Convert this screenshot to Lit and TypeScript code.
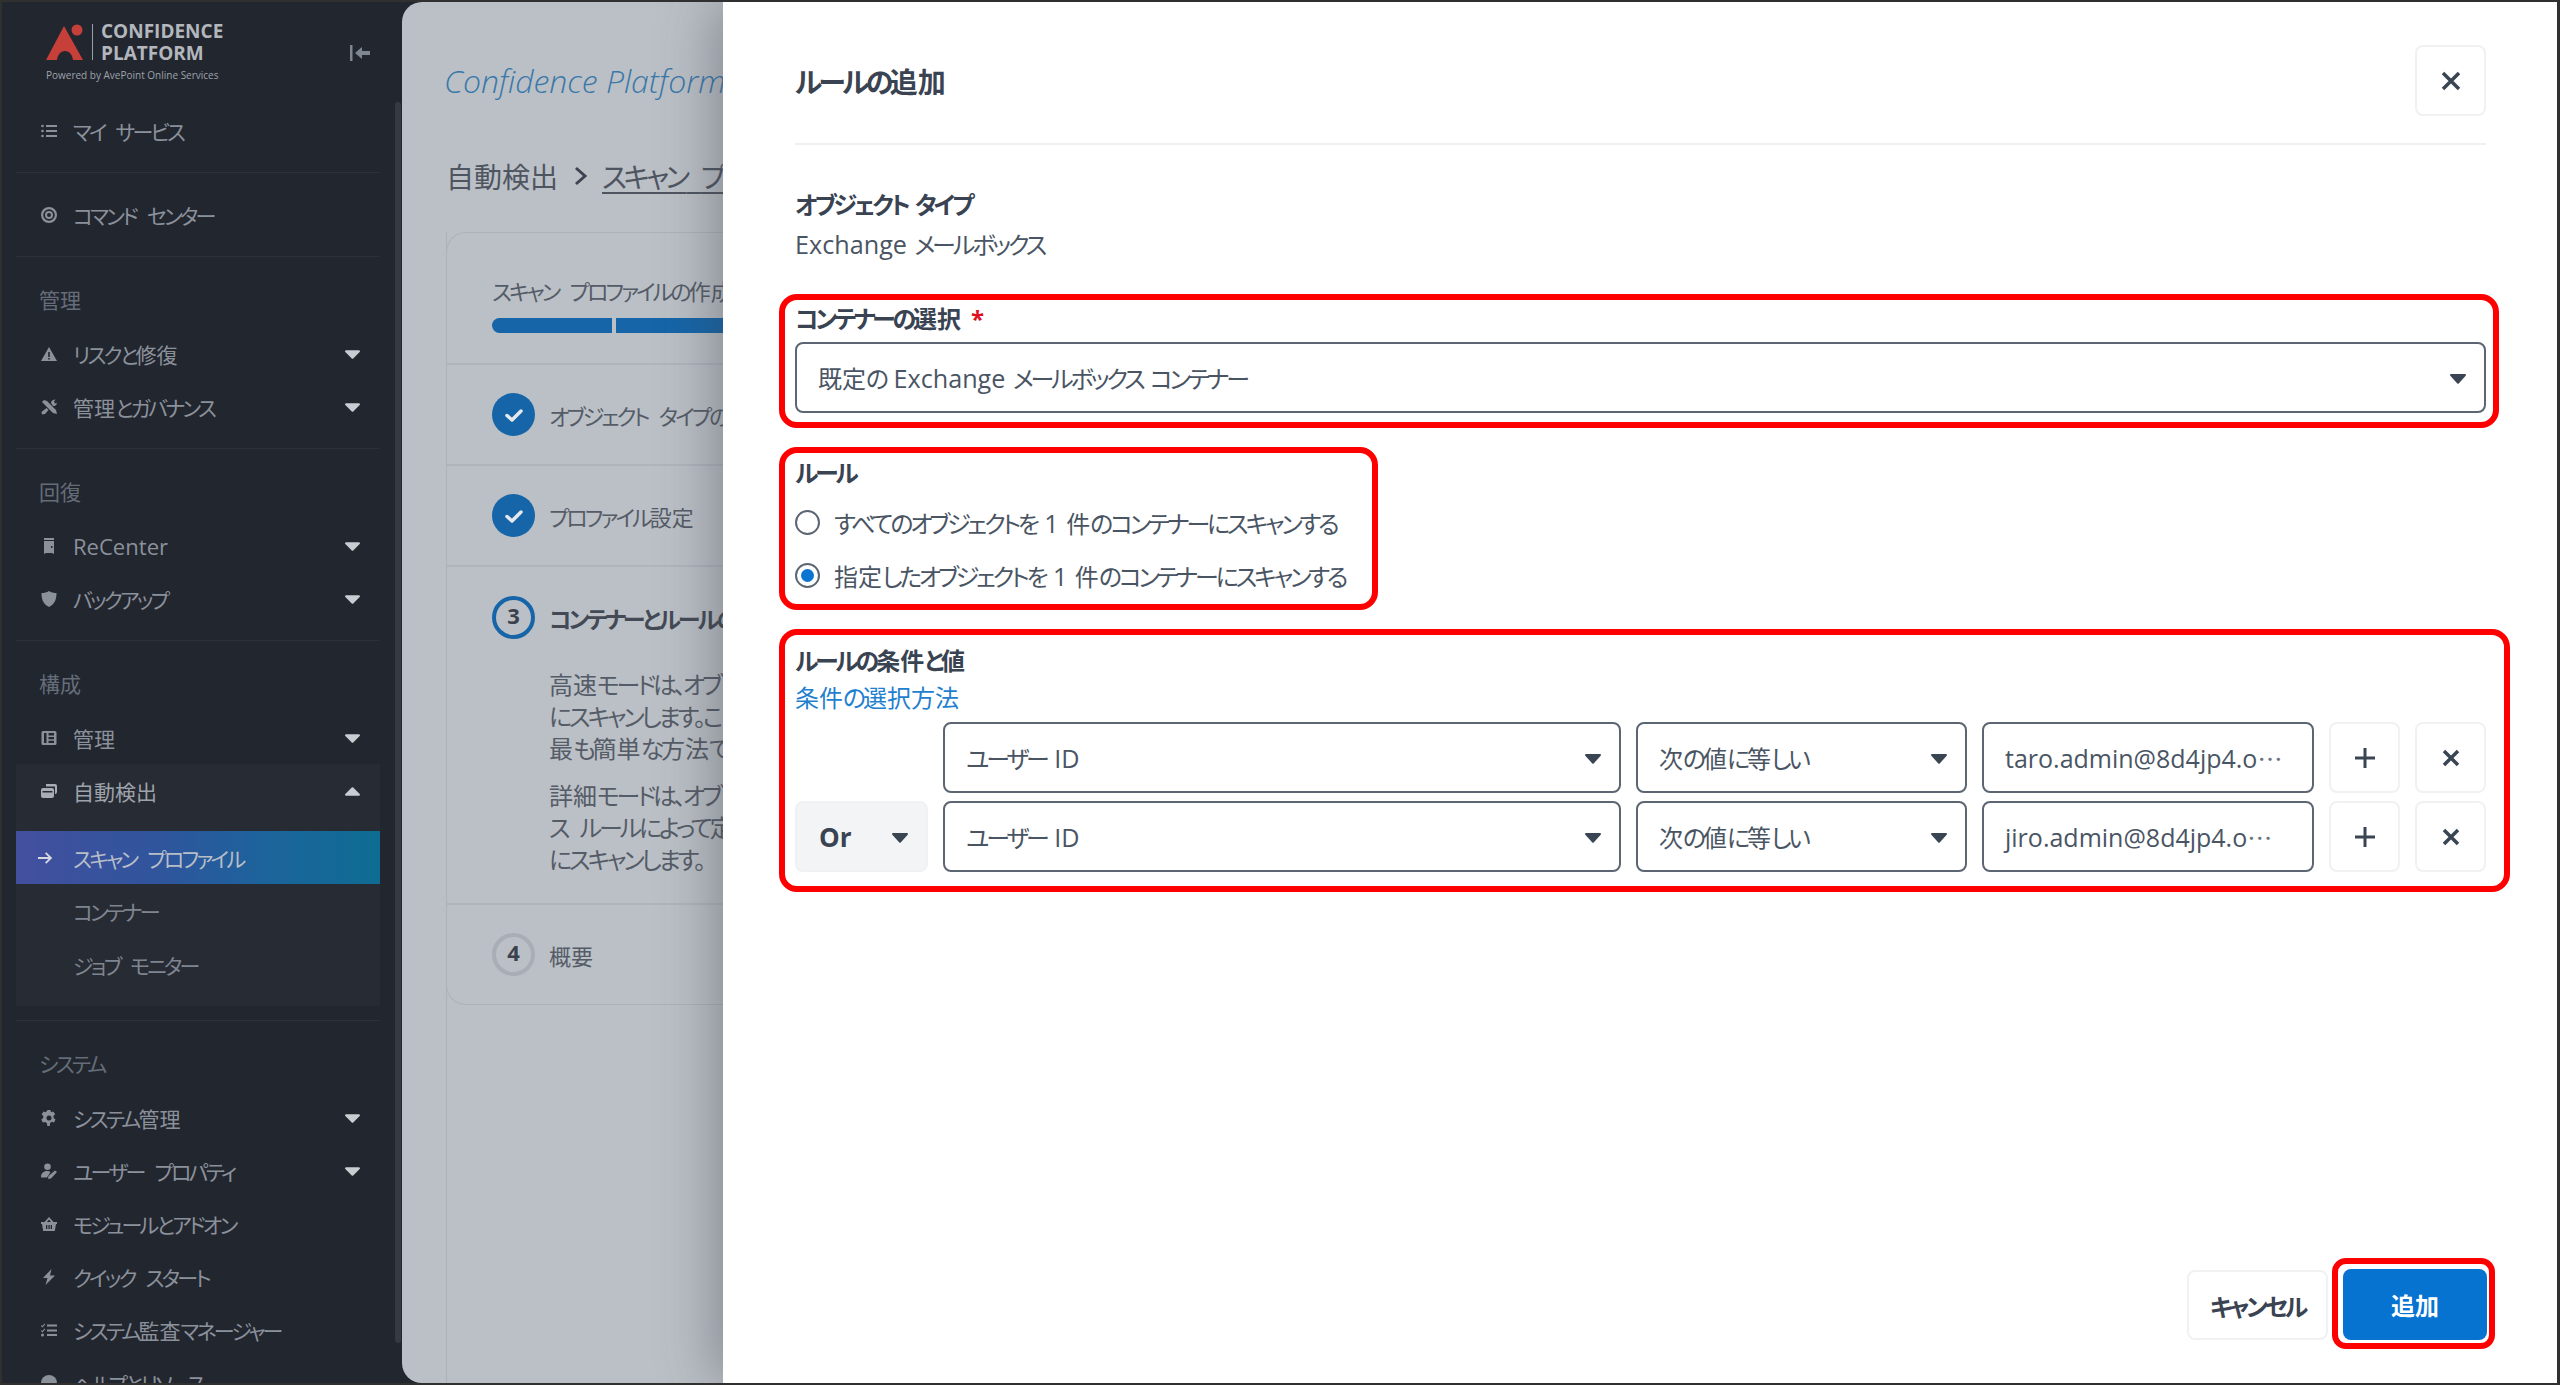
import { LitElement, html, css, svg } from "lit";
import { customElement } from "lit/decorators.js";

const icons: Record<string, unknown> = {
  list: svg`<circle cx="1.5" cy="3" r="1.3"/><circle cx="1.5" cy="8" r="1.3"/><circle cx="1.5" cy="13" r="1.3"/><rect x="5" y="2" width="11" height="2"/><rect x="5" y="7" width="11" height="2"/><rect x="5" y="12" width="11" height="2"/>`,
  target: svg`<path fill-rule="evenodd" d="M8 0a8 8 0 1 1 0 16A8 8 0 0 1 8 0zm0 2.2a5.8 5.8 0 1 0 0 11.6A5.8 5.8 0 0 0 8 2.2zM8 4a4 4 0 1 1 0 8 4 4 0 0 1 0-8zm0 2a2 2 0 1 0 0 4 2 2 0 0 0 0-4z"/>`,
  warn: svg`<path fill-rule="evenodd" d="M8 1l8 14H0zM7.2 6v5h1.6V6zm0 6v1.6h1.6V12z"/>`,
  tools: svg`<path d="M1 3l2-2 3 1 9 9 1 4-4-1-9-9zM10 4c0-2 2-3.500 4.500-3.500l-1.500 2 .8 1.700 1.700.3L16 3c.3 2.500-1.500 4.500-4 4zM5.500 9 7.500 11 4 15l-3 .5-.5-2.500z"/>`,
  door: svg`<path fill-rule="evenodd" d="M3 0h10v2H3zM3 3h10v13l-2-1H5l-2 1zm7 5v2h1.500V8z"/>`,
  shield: svg`<path d="M8 0c2 1.500 5 2 7.500 2 0 6-1.500 11-7.500 14C2 13 .5 8 .5 2 3 2 6 1.500 8 0z"/>`,
  table: svg`<path fill-rule="evenodd" d="M2 1h12a1.500 1.500 0 0 1 1.500 1.500v11A1.500 1.500 0 0 1 14 15H2a1.500 1.500 0 0 1-1.500-1.500v-11A1.500 1.500 0 0 1 2 1zm1 2v10h2.500V3zm4.500 0v2.500H13V3zm0 4v2.300H13V7zm0 3.700V13H13v-2.300z"/>`,
  cards: svg`<path fill-rule="evenodd" d="M5 1h9a2 2 0 0 1 2 2v6a2 2 0 0 1-2 2V3.500H5zM2 5h9a2 2 0 0 1 2 2v6a2 2 0 0 1-2 2H2a2 2 0 0 1-2-2V7a2 2 0 0 1 2-2zm-.5 3v1.500h10V8z"/>`,
  arrow: svg`<path d="M1 7h10.500L8 3.400 9.300 2.200 15.200 8l-5.900 5.800L8 12.600 11.500 9H1z"/>`,
  gear: svg`<path fill-rule="evenodd" d="M6.500 0h3l.5 2.300 2.200-.9 2 2.800-1.700 1.600.1 2.200 1.900 1.400-1.500 3-2.300-.6-1.700 1.500L8.800 16H6.300l-.4-2.700-1.800-1.400-2.300.6L.3 9.500l1.900-1.400.1-2.200L.6 4.200l2-2.800 2.200.9zM8 5.500a2.500 2.500 0 1 0 0 5 2.500 2.500 0 0 0 0-5z"/>`,
  user: svg`<circle cx="6.500" cy="3.800" r="3.300"/><path d="M0 14c0-3.500 2.500-6 6-6 1.500 0 2.500.3 3.500 1L6 14.500H0zM14 7.500l2 1.500-6 6.500-3 .5 .5-3z"/>`,
  basket: svg`<path fill-rule="evenodd" d="M8 1l4.500 5H16v2h-1l-1.200 7H2.200L1 8H0V6h3.500zM8 3.400 6 6h4zM5 9v4h1.300V9zm2.400 0v4h1.300V9zm2.300 0v4H11V9z"/>`,
  bolt: svg`<path d="M10.500 0 2 9h4.500L4.500 16 14 6.500H9z"/>`,
  check: svg`<path d="M.5 3l1 1L3.500 1.500 4.300 2.300 1.500 5.500 0 4zM.5 8l1 1 2-2.500.8.800-2.800 3.200L0 9zM1.500 11.500a1.500 1.500 0 1 1 0 3 1.500 1.500 0 0 1 0-3z"/><rect x="6" y="2.500" width="10" height="2"/><rect x="6" y="7.500" width="10" height="2"/><rect x="6" y="12" width="10" height="2"/>`,
  help: svg`<circle cx="8" cy="8" r="8"/>`,
};

type Row = { icon: string; label: string; caret?: boolean };

/* The original UI font has narrow kana: runs of kana are tightened and Latin runs slightly enlarged. */
const t = (text: string) => {
  const parts = text.split(/([\u3040-\u30ff\u3001\u3002]+|[A-Za-z0-9@.]+)/).filter(Boolean);
  return html`<span class="t">${parts.map((p) =>
    /^[\u3040-\u30ff\u3001\u3002]/.test(p)
      ? html`<span class="k">${p}</span>`
      : /^[A-Za-z0-9@.]/.test(p)
        ? html`<span class="l">${p}</span>`
        : p
  )}</span>`;
};

const caret = (up = false) => html`<svg class=${up ? "caret up" : "caret"} viewBox="0 0 14 8"><path d="M1 0h12a1 1 0 0 1 .7 1.700L7.700 7.700a1 1 0 0 1-1.400 0L.3 1.700A1 1 0 0 1 1 0z"/></svg>`;
const dark = () => html`<svg class="dcaret" viewBox="0 0 16 10"><path d="M1 0h14a1 1 0 0 1 .7 1.700L8.700 9.400a1 1 0 0 1-1.400 0L.3 1.700A1 1 0 0 1 1 0z"/></svg>`;

@customElement("app-root")
export class AppRoot extends LitElement {
  static styles = css`
    :host {
      display: block; width: 2560px; height: 1385px; box-sizing: border-box;
      border: 2px solid #303030; border-right-width: 3px; background: #22262f;
      font-family: "Open Sans", "Noto Sans CJK JP", sans-serif;
      font-feature-settings: "palt";
      overflow: hidden; position: relative;
    }
    .shell { display: flex; height: 100%; position: relative; overflow: hidden; }
    .t { white-space: pre; word-spacing: .25em; }
    .modal .t { word-spacing: .05em; }
    .k { letter-spacing: -.13em; }
    .l { font-size: 1.05em; }

    .side { width: 400px; flex: none; position: relative; overflow: hidden; color: #8b919b; font-size: 21px; }
    .thumb { position: absolute; right: 1px; top: 100px; width: 6px; height: 1241px; background: #343943; border-radius: 3px; }
    .logo { height: 102px; position: relative; box-sizing: border-box; padding: 21px 0 0 44px; }
    .logo-top { display: flex; align-items: center; gap: 8px; height: 38px; }
    .logo-top svg.mark { width: 38px; height: 38px; flex: none; }
    .logo-rule { width: 1px; height: 36px; background: #9aa0a8; }
    .brand { font-size: 19px; line-height: 22px; font-weight: 700; color: #b3b7bd; }
    .powered { font-size: 10px; color: #9ea3aa; margin-top: 7px; white-space: nowrap; line-height: 14px; }
    .collapse { position: absolute; left: 347px; top: 42px; width: 22px; height: 18px; fill: #7f8691; }
    .row { height: 53px; display: flex; align-items: center; padding-left: 39px; position: relative; white-space: nowrap; }
    .row svg.ic { width: 16px; height: 16px; fill: #8b919b; flex: none; margin-right: 16px; }
    .caret { position: absolute; left: 343px; top: 23px; width: 15px; height: 9px; fill: #c9cdd2; }
    .caret.up { transform: rotate(180deg); }
    .div { height: 1px; background: #2b3039; margin: 15px 22px 0 14px; }
    .div.end { margin-top: 14px; }
    .gap { height: 15px; }
    .head { height: 70px; box-sizing: border-box; padding: 27px 0 0 37px; line-height: 32px; color: #656d79; font-size: 21px; }
    .panel { background: #272b34; margin: 0 22px 0 14px; height: 242px; }
    .panel .row { padding-left: 25px; }
    .panel .row.top { color: #9ea3ab; }
    .panel .row.top svg.ic { fill: #a9adb4; }
    .panel .caret { left: 329px; }
    .active { height: 53px; margin-top: 14px; display: flex; align-items: center; padding-left: 21px; color: #b8bec7;
      background: linear-gradient(90deg, #434f9f 0%, #2f559d 40%, #1b649b 70%, #0e6c92 100%); }
    .active svg { width: 16px; height: 16px; fill: #d5d8dd; margin-right: 20px; }
    .sub { height: 54px; display: flex; align-items: center; padding-left: 57px; color: #7f8590; }

    .main { flex: 1; background: #bbc0c6; border-radius: 20px 0 0 20px; overflow: hidden; padding: 0 0 0 44px; min-width: 0; display: flex; flex-direction: column; color: #555c67; }
    .brandline { font-size: 32px; font-style: italic; font-weight: 300; color: #3a78a9; height: 60px; margin: 49px 0 0 -2px; line-height: 60px; white-space: nowrap; }
    .crumb { display: flex; align-items: center; font-size: 28px; margin-top: 35px; height: 60px; white-space: nowrap; color: #4e5561; }
    .crumb svg { width: 16px; height: 22px; margin: 0 13px 0 15px; stroke: #3d4450; fill: none; stroke-width: 3; }
    .crumb u { text-underline-offset: 4px; }
    .rail { flex: 1; border-left: 1px solid #adb2b9; margin-top: 26px; }
    .card { border: 1px solid #adb2b9; border-right: none; border-radius: 20px 0 0 20px; width: 900px; margin-left: -1px; }
    .ch { height: 132px; box-sizing: border-box; padding: 41px 0 0 45px; border-bottom: 2px solid #b0b5bc; }
    .ch-label { font-size: 22px; line-height: 34px; white-space: nowrap; }
    .bar { display: flex; gap: 4px; margin-top: 10px; }
    .bar i { display: block; width: 120px; height: 15px; background: #1565a8; }
    .bar i:first-child { border-radius: 8px 0 0 8px; }
    .bar i:last-child { width: 400px; }
    .step { box-sizing: border-box; padding: 0 0 0 45px; border-bottom: 2px solid #b0b5bc; }
    .step:last-child { border-bottom: none; }
    .st-head { display: flex; align-items: center; gap: 14px; height: 99px; font-size: 22px; white-space: nowrap; }
    .num { width: 43px; height: 43px; flex: none; box-sizing: border-box; border-radius: 50%; display: flex; align-items: center; justify-content: center; font-weight: 700; font-size: 22px; color: #3b424d; padding-bottom: 6px; }
    .num.done { background: #1565a8; padding: 0; }
    .num.done svg { width: 24px; height: 24px; stroke: #e6e9ec; fill: none; stroke-width: 3.500; stroke-linecap: round; stroke-linejoin: round; }
    .num.cur { border: 4px solid #1565a8; }
    .num.todo { border: 4px solid #a9aeb6; }
    .st-head b { color: #434a55; font-size: 23px; }
    .para { margin-left: 57px; font-size: 24px; line-height: 32px; white-space: nowrap; }
    .para + .para { margin-top: 15px; }
    .step.open { height: 338px; }
    .step.open .st-head { height: 88px; padding-top: 13px; box-sizing: border-box; }
    .st-head + .para { margin-top: 14px; }

    .modal { position: absolute; left: 721px; right: 0; top: 0; bottom: 0; background: #fff; box-shadow: -10px 0 50px rgba(60, 66, 76, .4);
      box-sizing: border-box; padding: 43px 71px 34px 72px; display: flex; flex-direction: column; color: #4a5564; font-size: 24px; }
    .mh { display: flex; justify-content: space-between; align-items: center; padding-bottom: 27px; border-bottom: 2px solid #eef0f2; }
    .mh h1 { margin: 0; font-size: 28px; font-weight: 700; color: #394351; }
    .icbtn { width: 71px; height: 71px; box-sizing: border-box; border: 2px solid #eff1f3; border-radius: 8px; display: flex; align-items: center; justify-content: center; background: #fff; flex: none; }
    .icbtn svg { width: 20px; height: 20px; stroke: #3a4554; stroke-width: 3.500; fill: none; }
    .lbl { font-weight: 700; color: #394351; font-size: 24px; line-height: 40px; }
    .lbl em { color: #e01020; font-style: normal; margin-left: 10px; }
    .ot { margin-top: 40px; }
    .val { line-height: 38px; height: 40px; }
    .hl { border: 6px solid #ff0000; border-radius: 18px; margin-left: -16px; padding: 0 7px 0 10px; margin-right: -13px; box-sizing: border-box; }
    .h1 { margin-top: 29px; height: 134px; }
    .h1 .lbl { height: 42px; line-height: 37px; }
    .sel { height: 71px; box-sizing: border-box; border: 2px solid #5c6572; border-radius: 8px; background: #fff; display: flex; align-items: center; justify-content: space-between; padding: 0 18px 0 21px; white-space: nowrap; min-width: 0; font-size: 24px; }
    .dcaret { width: 16px; height: 10px; fill: #3a4554; flex: none; margin-top: 3px; }
    .h2 { margin-top: 19px; height: 163px; width: 599px; margin-right: 0; }
    .h2 .lbl { height: 43px; line-height: 40px; }
    .rad { height: 53px; display: flex; align-items: center; gap: 14px; white-space: nowrap; font-size: 24px; }
    .circle { width: 25px; height: 25px; box-sizing: border-box; border: 2px solid #5c6572; border-radius: 50%; padding: 4px; flex: none; }
    .circle i { display: block; width: 100%; height: 100%; border-radius: 50%; background: #0a74d2; }
    .h3 { margin-top: 19px; height: 263px; margin-right: -24px; padding-right: 18px; }
    .h3 .lbl { padding: 6px 0 2px; }
    .link { color: #1f80cf; line-height: 30px; font-size: 24px; }
    .grid { display: grid; grid-template-columns: 133px 678px 331px 332px 71px 71px; column-gap: 15px; row-gap: 8px; margin-top: 9px; grid-auto-rows: 71px; }
    .or { background: #f3f4f6; border: 2px solid #f0f1f3; box-sizing: border-box; border-radius: 8px; display: flex; align-items: center; justify-content: space-between; padding: 0 18px 0 22px; font-weight: 700; font-size: 26px; color: #394351; }
    .input { justify-content: flex-start; overflow: hidden; font-size: 25px; }
    .dots { font-family: "Noto Sans CJK JP", sans-serif; letter-spacing: -2px; color: #6b7480; }
    .plus svg { width: 24px; height: 24px; stroke-width: 3; }
    .ft { margin-top: auto; display: flex; justify-content: flex-end; align-items: flex-start; gap: 4px; }
    .cancel { width: 141px; height: 70px; box-sizing: border-box; border: 2px solid #eff1f3; border-radius: 8px; margin-top: 12px; display: flex; align-items: center; justify-content: center; font-weight: 700; font-size: 24px; color: #394351; }
    .frame { border: 6px solid #ff0000; border-radius: 14px; padding: 5px 2px 3px 5px; margin-right: -9px; }
    .add { width: 144px; height: 71px; border-radius: 8px; background: #0773d1; color: #fff; font-weight: 700; font-size: 24px; display: flex; align-items: center; justify-content: center; }
  `;

  private row(r: Row) {
    return html`<div class="row"><svg class="ic" viewBox="0 0 16 16">${icons[r.icon]}</svg>${t(r.label)}${r.caret ? caret() : ""}</div>`;
  }

  private condRow(or: boolean, value: string) {
    const x = html`<svg viewBox="0 0 20 20"><path d="M3 3l14 14M17 3L3 17"/></svg>`;
    const p = html`<svg viewBox="0 0 24 24"><path d="M12 2v20M2 12h20"/></svg>`;
    return html`
      ${or ? html`<div class="or">Or ${dark()}</div>` : html`<div></div>`}
      <div class="sel">${t("ユーザー ID")} ${dark()}</div>
      <div class="sel">${t("次の値に等しい")} ${dark()}</div>
      <div class="sel input">${value}<span class="dots">⋯</span></div>
      <div class="icbtn plus">${p}</div>
      <div class="icbtn">${x}</div>`;
  }

  render() {
    const x = html`<svg viewBox="0 0 20 20"><path d="M2 2l16 16M18 2L2 18"/></svg>`;
    const check = html`<svg viewBox="0 0 24 24"><path d="M5 12.500l5 4.500 9-9"/></svg>`;
    return html`
      <div class="shell">
        <aside class="side">
          <div class="thumb"></div>
          <div class="logo">
            <div class="logo-top">
              <svg class="mark" viewBox="0 0 38 38">
                <path fill="#c63f38" fill-rule="evenodd" d="M18 3 37 37H27c-.5-5-3.500-9-8-9s-7.500 4-8 9H0z"/>
                <circle cx="31" cy="7" r="5.500" fill="#c63f38"/>
              </svg>
              <div class="logo-rule"></div>
              <div class="brand">CONFIDENCE<br />PLATFORM</div>
            </div>
            <div class="powered">Powered by AvePoint Online Services</div>
            <svg class="collapse" viewBox="0 0 22 18"><rect x="1" y="1" width="2.500" height="16"/><path d="M6 9l7-6v4h8v4h-8v4z"/></svg>
          </div>
          ${this.row({ icon: "list", label: "マイ サービス" })}
          <div class="div"></div>
          <div class="gap"></div>
          ${this.row({ icon: "target", label: "コマンド センター" })}
          <div class="div"></div>
          <div class="head">管理</div>
          ${this.row({ icon: "warn", label: "リスクと修復", caret: true })}
          ${this.row({ icon: "tools", label: "管理とガバナンス", caret: true })}
          <div class="div"></div>
          <div class="head">回復</div>
          ${this.row({ icon: "door", label: "ReCenter", caret: true })}
          ${this.row({ icon: "shield", label: "バックアップ", caret: true })}
          <div class="div"></div>
          <div class="head">構成</div>
          ${this.row({ icon: "table", label: "管理", caret: true })}
          <div class="panel">
            <div class="row top"><svg class="ic" viewBox="0 0 16 16">${icons.cards}</svg>自動検出${caret(true)}</div>
            <div class="active"><svg viewBox="0 0 16 16">${icons.arrow}</svg>${t("スキャン プロファイル")}</div>
            <div class="sub">${t("コンテナー")}</div>
            <div class="sub">${t("ジョブ モニター")}</div>
          </div>
          <div class="div end"></div>
          <div class="head">${t("システム")}</div>
          ${this.row({ icon: "gear", label: "システム管理", caret: true })}
          ${this.row({ icon: "user", label: "ユーザー プロパティ", caret: true })}
          ${this.row({ icon: "basket", label: "モジュールとアドオン" })}
          ${this.row({ icon: "bolt", label: "クイック スタート" })}
          ${this.row({ icon: "check", label: "システム監査マネージャー" })}
          ${this.row({ icon: "help", label: "ヘルプとリソース" })}
        </aside>

        <main class="main">
          <div class="brandline">Confidence Platform</div>
          <div class="crumb">自動検出<svg viewBox="0 0 16 22"><path d="M3 3l9 8-9 8"/></svg><u>${t("スキャン プロファイル")}</u></div>
          <div class="rail">
            <div class="card">
              <div class="ch">
                <div class="ch-label">${t("スキャン プロファイルの作成")}</div>
                <div class="bar"><i></i><i></i></div>
              </div>
              <div class="step"><div class="st-head"><div class="num done">${check}</div>${t("オブジェクト タイプの選択")}</div></div>
              <div class="step"><div class="st-head"><div class="num done">${check}</div>${t("プロファイル設定")}</div></div>
              <div class="step open">
                <div class="st-head"><div class="num cur">3</div><b>${t("コンテナーとルールの設定")}</b></div>
                <div class="para">${t("高速モードは、オブ")}<br />${t("にスキャンします。こ")}<br />${t("最も簡単な方法で")}</div>
                <div class="para">${t("詳細モードは、オブ")}<br />${t("ス ルールによって定")}<br />${t("にスキャンします。")}</div>
              </div>
              <div class="step"><div class="st-head"><div class="num todo">4</div>概要</div></div>
            </div>
          </div>
        </main>

        <section class="modal">
          <div class="mh"><h1>${t("ルールの追加")}</h1><div class="icbtn">${x}</div></div>
          <div class="lbl ot">${t("オブジェクト タイプ")}</div>
          <div class="val">${t("Exchange メールボックス")}</div>

          <div class="hl h1">
            <div class="lbl">${t("コンテナーの選択")}<em>*</em></div>
            <div class="sel">${t("既定の Exchange メールボックス コンテナー")} ${dark()}</div>
          </div>

          <div class="hl h2">
            <div class="lbl">${t("ルール")}</div>
            <div class="rad"><span class="circle"></span>${t("すべてのオブジェクトを 1 件のコンテナーにスキャンする")}</div>
            <div class="rad"><span class="circle"><i></i></span>${t("指定したオブジェクトを 1 件のコンテナーにスキャンする")}</div>
          </div>

          <div class="hl h3">
            <div class="lbl">${t("ルールの条件と値")}</div>
            <div class="link">${t("条件の選択方法")}</div>
            <div class="grid">
              ${this.condRow(false, "taro.admin@8d4jp4.o")}
              ${this.condRow(true, "jiro.admin@8d4jp4.o")}
            </div>
          </div>

          <div class="ft">
            <div class="cancel">${t("キャンセル")}</div>
            <div class="frame"><div class="add">追加</div></div>
          </div>
        </section>
      </div>
    `;
  }
}
